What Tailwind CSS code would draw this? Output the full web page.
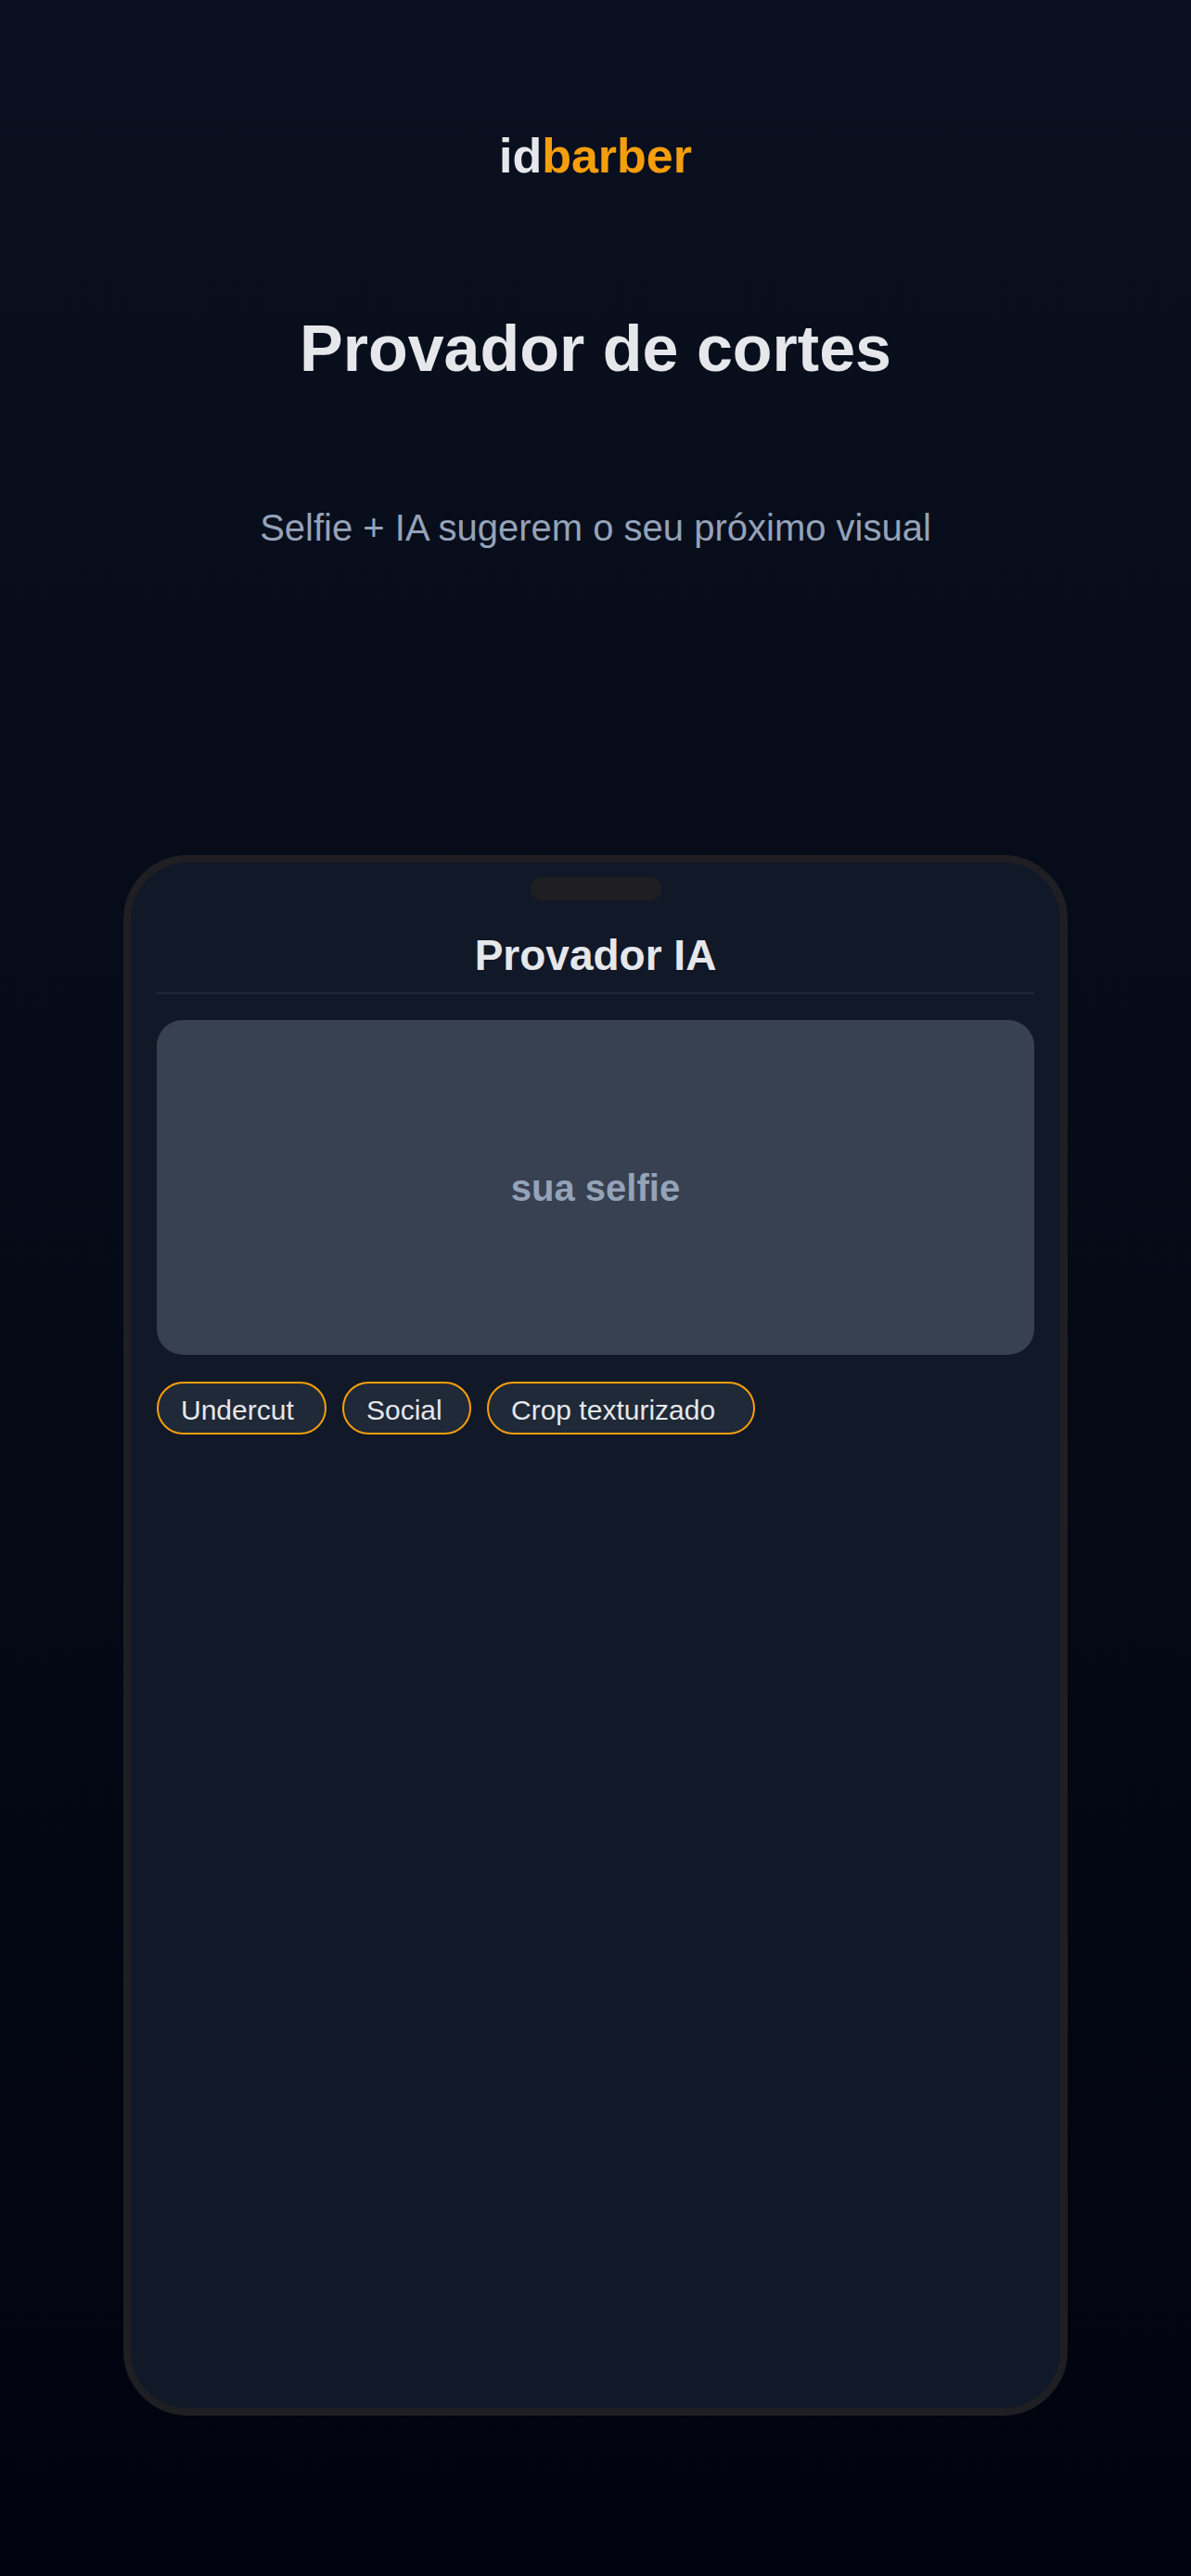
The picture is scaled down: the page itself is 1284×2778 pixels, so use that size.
<!DOCTYPE html>
<html lang="pt-BR">
<head>
  <meta charset="UTF-8" />
  <meta name="viewport" content="width=device-width, initial-scale=1.0" />
  <title>idbarber - Provador de cortes</title>
  <script src="https://cdn.jsdelivr.net/npm/@tailwindcss/browser@4"></script>
</head>
<body class="flex min-h-screen flex-col bg-linear-to-b/srgb from-[#0a101f] to-[#01040f] px-[133px] pt-[138px] pb-[173px] font-['Liberation_Sans',Arial,sans-serif] text-[#e5e7eb]">

  <!-- Chamada -->
  <header class="text-center">
    <p class="text-[52px] leading-[60px] font-bold">id<span class="text-[#f59e0b]">barber</span></p>
    <h1 class="mt-[138px] text-[70px] leading-[80px] font-bold">Provador de cortes</h1>
    <p class="mt-[129px] text-[40px] leading-[48px] text-[#94a3b8]">Selfie + IA sugerem o seu próximo visual</p>
  </header>

  <!-- Celular -->
  <main class="mt-[329px] flex flex-1 flex-col rounded-[70px] border-8 border-[#1f1f23] bg-[#111827] px-7 pt-4">
    <div class="mx-auto h-[25px] w-[141px] rounded-full bg-[#1f1f23]"></div>

    <h2 class="mt-[31px] border-b-2 border-[#1f2937] pb-3 text-center text-[46px] leading-[56px] font-bold">Provador IA</h2>

    <div class="mt-7 flex h-[361px] items-center justify-center rounded-[28px] bg-[#374151] text-[40px] leading-[48px] font-bold text-[#94a3b8]">sua selfie</div>

    <!-- Sugestões de corte -->
    <div class="mt-[29px] flex flex-wrap gap-[17px] text-[30px]">
      <button type="button" class="h-[57px] w-[183px] rounded-full border-2 border-[#f59e0b] bg-[#1f2937] pt-1 pl-6 text-left">Undercut</button>
      <button type="button" class="h-[57px] w-[139px] rounded-full border-2 border-[#f59e0b] bg-[#1f2937] pt-1 pl-6 text-left">Social</button>
      <button type="button" class="h-[57px] w-[289px] rounded-full border-2 border-[#f59e0b] bg-[#1f2937] pt-1 pl-6 text-left">Crop texturizado</button>
    </div>
  </main>

</body>
</html>
